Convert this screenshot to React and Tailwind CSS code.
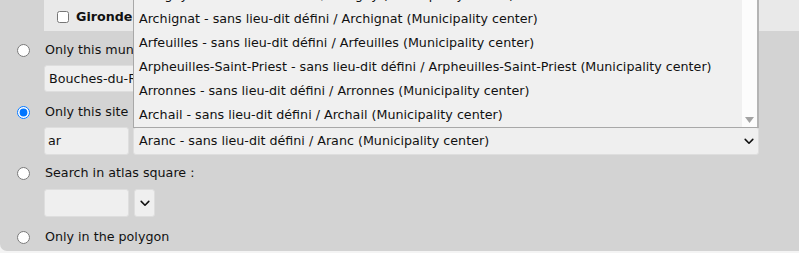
import React from "react";

const font = { fontFamily: '"DejaVu Sans", Verdana, sans-serif' };

function Chevron({ className = "" }) {
  return (
    <svg className={className} width="10" height="7" viewBox="0 0 10 7" fill="none">
      <path d="M1.2 1.4 L5 5.2 L8.8 1.4" stroke="#111" strokeWidth="1.6" strokeLinecap="round" strokeLinejoin="round" />
    </svg>
  );
}

function RadioRow({ label, checked }) {
  return (
    <div className="flex items-center h-[20px] pl-[17px]">
      <input
        type="radio"
        name="mode"
        defaultChecked={checked}
        className="m-0 w-[13px] h-[13px] shrink-0"
      />
      <span className="ml-[15px] text-[#111] whitespace-nowrap">{label}</span>
    </div>
  );
}

const items = [
  "Arbigny - sans lieu-dit défini / Arbigny (Municipality center)",
  "Archignat - sans lieu-dit défini / Archignat (Municipality center)",
  "Arfeuilles - sans lieu-dit défini / Arfeuilles (Municipality center)",
  "Arpheuilles-Saint-Priest - sans lieu-dit défini / Arpheuilles-Saint-Priest (Municipality center)",
  "Arronnes - sans lieu-dit défini / Arronnes (Municipality center)",
  "Archail - sans lieu-dit défini / Archail (Municipality center)",
];

export default function App() {
  return (
    <div className="relative w-[799px] h-[253px] bg-[#f4f4f4] overflow-hidden text-[12.7px]" style={font}>
      <div className="h-[251px] bg-[#d3d3d3] rounded-bl-[7px] flex flex-col">
        {/* checkbox list box */}
        <div className="ml-[44px] h-[31px] bg-[#e9e9e9] flex items-center pl-[13px] pt-[2px]">
          <input type="checkbox" className="m-0 w-[12px] h-[12px]" />
          <span className="ml-[7px] font-bold text-[#111]">Gironde</span>
        </div>

        <div className="mt-[9px]">
          <RadioRow label="Only this municipality :" />
        </div>
        <div className="mt-[5px] ml-[44px] w-[220px] h-[27px] bg-[#efefef] border border-[#dedede] rounded-[3px] flex items-center pl-[4px] text-[#111]">
          Bouches-du-Rhône
        </div>

        <div className="mt-[10px]">
          <RadioRow label="Only this site :" checked />
        </div>
        <div className="mt-[5px] ml-[44px] flex gap-[4px] h-[28px]">
          <div className="w-[85px] h-full bg-[#efefef] border border-[#dedede] rounded-[3px] flex items-center pl-[3px] text-[#111]">
            ar
          </div>
          <div className="w-[626px] h-full bg-[#efefef] border border-[#dedede] rounded-[3px] flex items-center pl-[5px] pr-[4px] text-[#111]">
            <span className="flex-1 whitespace-nowrap">Aranc - sans lieu-dit défini / Aranc (Municipality center)</span>
            <Chevron />
          </div>
        </div>

        <div className="mt-[8px]">
          <RadioRow label="Search in atlas square :" />
        </div>
        <div className="mt-[6px] ml-[44px] flex gap-[5px] h-[28px]">
          <div className="w-[85px] h-full bg-[#efefef] border border-[#dedede] rounded-[3px]" />
          <div className="w-[21px] h-full bg-[#efefef] border border-[#dedede] rounded-[3px] flex items-center justify-center">
            <Chevron />
          </div>
        </div>

        <div className="mt-[10px]">
          <RadioRow label="Only in the polygon" />
        </div>
      </div>

      {/* open dropdown list overlay */}
      <div className="absolute left-[133px] top-0 w-[626px] h-[128px] bg-[#f0f0f0] border-l border-b border-[#a8a8a8] border-r-2 border-r-[#b4b4b4] flex">
        <div className="flex-1 overflow-hidden">
          <div className="-mt-[17px]">
            {items.map((t) => (
              <div key={t} className="h-[24px] leading-[24px] pl-[5px] whitespace-nowrap text-[#111]">
                {t}
              </div>
            ))}
          </div>
        </div>
        <div className="w-[15px] bg-[#fcfcfc] flex flex-col justify-end items-center pb-[4px]">
          <svg width="9" height="6" viewBox="0 0 9 6">
            <path d="M0 0 L9 0 L4.5 6 Z" fill="#a3a3a3" />
          </svg>
        </div>
      </div>
    </div>
  );
}
